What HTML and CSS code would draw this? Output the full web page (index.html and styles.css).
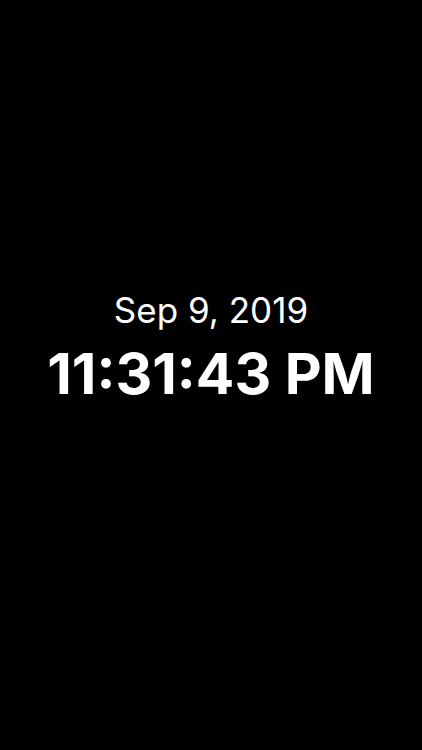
FILE: index.html
```html
<!DOCTYPE html>
<html>
<head>
<meta charset="utf-8">
<link rel="stylesheet" href="styles.css">
</head>
<body>
<main class="screen">
  <div class="clock">
    <div class="date">Sep 9, 2019</div>
    <div class="time">11:31:43 PM</div>
  </div>
</main>
</body>
</html>
```
FILE: styles.css
```css
html, body {
  margin: 0;
  padding: 0;
  background: #000;
}
.screen {
  width: 422px;
  height: 750px;
  background: #000;
  display: flex;
  flex-direction: column;
  align-items: center;
  padding-top: 290px;
  box-sizing: border-box;
  font-family: Inter, "Noto Sans", sans-serif;
  color: #fff;
}
.clock {
  display: flex;
  flex-direction: column;
  align-items: center;
}
.date {
  font-size: 35px;
  font-weight: 400;
  line-height: 40px;
}
.time {
  font-size: 57px;
  font-weight: 700;
  line-height: 64px;
  margin-top: 12px;
}
```
